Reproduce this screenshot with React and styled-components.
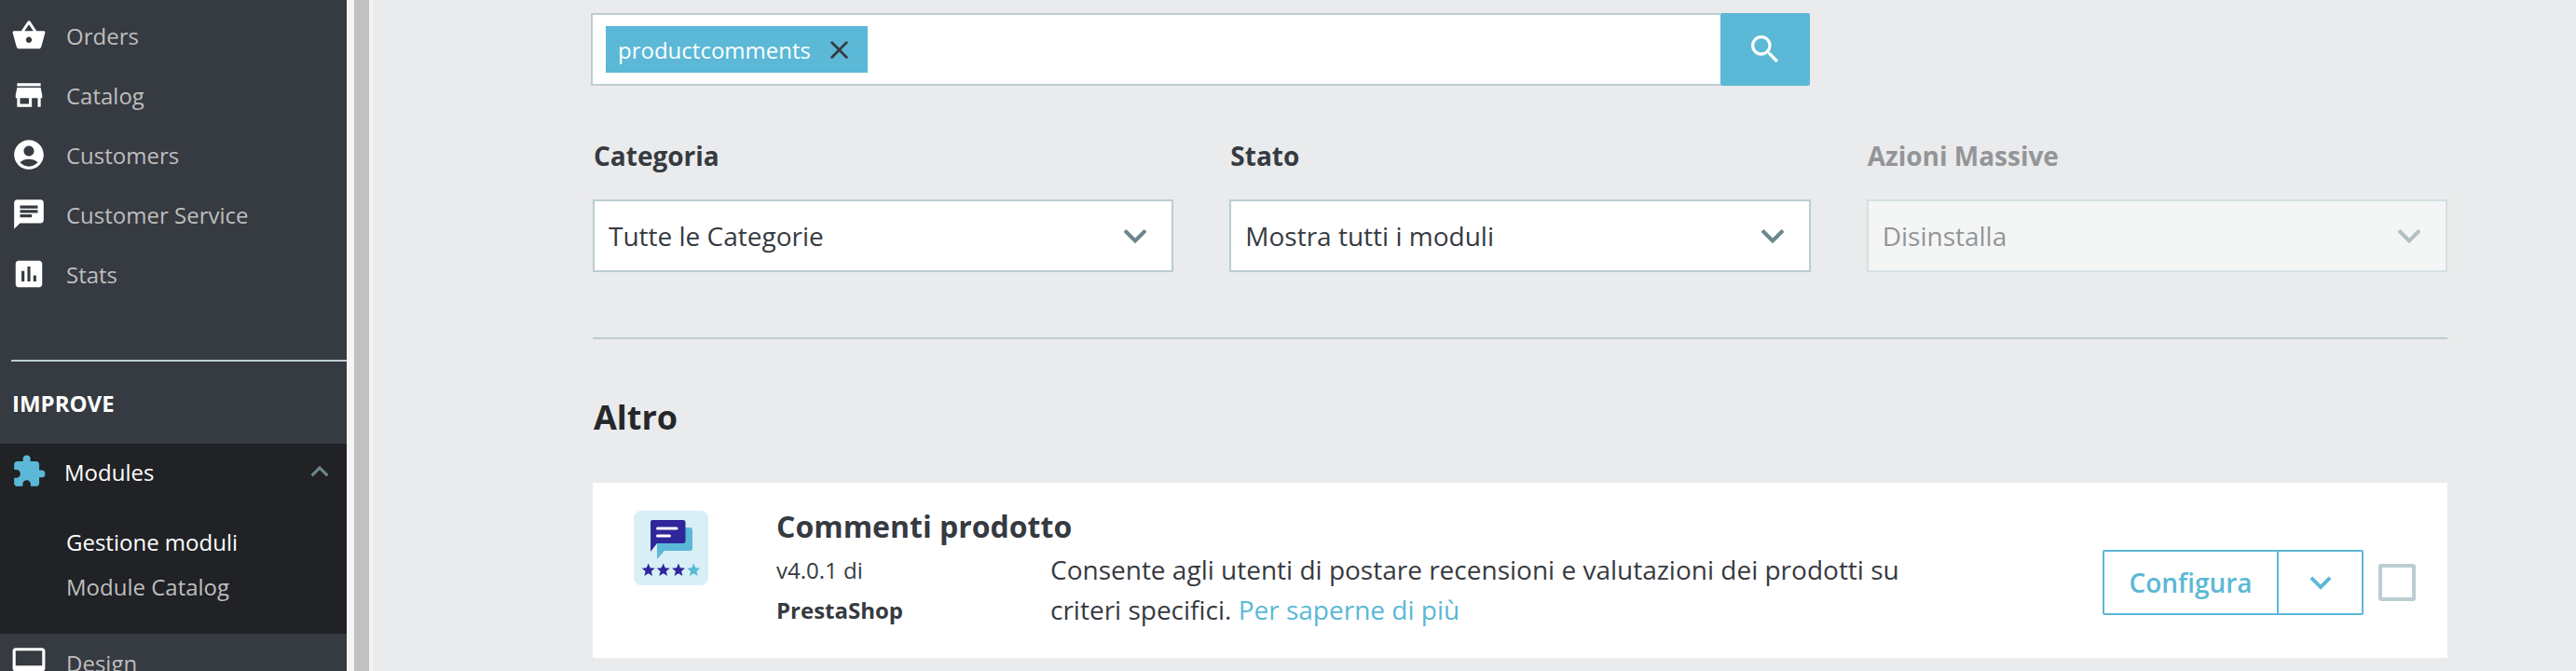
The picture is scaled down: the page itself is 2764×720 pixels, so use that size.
import React from "react"
import styled, { createGlobalStyle } from "styled-components"
import {
  MdShoppingBasket,
  MdStore,
  MdAccountCircle,
  MdChat,
  MdAssessment,
  MdExtension,
  MdExpandMore,
  MdExpandLess,
  MdSearch,
  MdClose,
} from "react-icons/md"

const GlobalStyle = createGlobalStyle`
  html, body {
    margin: 0;
    padding: 0;
    background: #eaebec;
    font-family: "Open Sans", "Noto Sans", sans-serif;
    color: #363a41;
  }
`

const Page = styled("div")`
  display: flex;
  width: 2764px;
  height: 720px;
  overflow: hidden;
`

const Sidebar = styled("nav")`
  flex: none;
  display: flex;
  flex-direction: column;
  width: 372px;
  padding-top: 6px;
  box-sizing: border-box;
  background: #363a41;
`

const NavRow = styled("div")`
  flex: none;
  display: flex;
  align-items: center;
  height: ${(p) => p.$height || 64}px;
  padding-left: 12px;
  color: #bebebe;
  font-size: 24px;
`

const NavIcon = styled("span")`
  display: flex;
  justify-content: center;
  flex: none;
  width: 38px;
  margin-right: 21px;
  color: #fff;
  font-size: 38px;
`

const NavDivider = styled("div")`
  flex: none;
  height: 2px;
  margin: 60px 0 0 12px;
  background: #bbcdd2;
`

const NavTitle = styled("div")`
  flex: none;
  padding: 27px 0 25px 13px;
  color: #fff;
  font-size: 24px;
  font-weight: 700;
  line-height: 36px;
`

const ActiveGroup = styled("div")`
  flex: none;
  height: 204px;
  background: #202226;
`

const ActiveRow = styled("div")`
  display: flex;
  align-items: center;
  height: 60px;
  padding: 0 10px 0 12px;
  color: #fff;
  font-size: 24px;
`

const PuzzleIcon = styled("span")`
  display: flex;
  flex: none;
  width: 38px;
  margin-right: 19px;
  color: #5bb8d6;
  font-size: 40px;
`

const Collapse = styled("span")`
  display: flex;
  margin-left: auto;
  color: #6c868e;
  font-size: 38px;
`

const SubMenu = styled("div")`
  padding: 22px 0 0 71px;
`

const SubItem = styled("div")`
  height: 48px;
  color: ${(p) => (p.$active ? "#fff" : "#bebebe")};
  font-size: 24px;
  line-height: 48px;
`

const Gutter = styled("div")`
  flex: none;
  width: 16px;
  padding: 0 4px 0 8px;
  background: #f4f4f4;
`

const Thumb = styled("div")`
  height: 100%;
  background: #c1c1c1;
`

const Main = styled("main")`
  flex: 1;
  padding: 14px 138px 0 234px;
  min-width: 0;
`

const SearchBar = styled("div")`
  display: flex;
  width: 1308px;
  height: 78px;
`

const SearchField = styled("div")`
  flex: 1;
  display: flex;
  align-items: center;
  padding-left: 14px;
  border: 2px solid #bbcdd2;
  border-right: 0;
  background: #fff;
`

const Tag = styled("div")`
  display: flex;
  align-items: center;
  height: 50px;
  padding: 0 14px 0 13px;
  background: #5bb8d6;
  color: #fff;
  font-size: 24px;
`

const TagClose = styled("span")`
  display: flex;
  margin-left: 14px;
  color: #363a41;
  font-size: 33px;
`

const SearchButton = styled("div")`
  display: flex;
  align-items: center;
  justify-content: center;
  flex: none;
  width: 96px;
  border-radius: 2px;
  background: #5bb8d6;
  color: #fff;
  font-size: 40px;
`

const Offset = styled("div")`
  margin-left: 2px;
`

const Filters = styled("div")`
  display: grid;
  grid-template-columns: repeat(3, 1fr);
  gap: 60px;
  margin-top: 55px;
`

const FilterLabel = styled("div")`
  margin-bottom: 27px;
  padding-left: 1px;
  color: ${(p) => (p.$disabled ? "#939598" : "#363a41")};
  font-size: 28px;
  font-weight: 700;
  line-height: 40px;
`

const Select = styled("div")`
  display: flex;
  align-items: center;
  justify-content: space-between;
  height: 78px;
  padding: 0 14px 0 15px;
  box-sizing: border-box;
  border: 2px solid ${(p) => (p.$disabled ? "#d3dfe3" : "#bbcdd2")};
  background: ${(p) => (p.$disabled ? "#f4f6f5" : "#fff")};
  color: ${(p) => (p.$disabled ? "#939598" : "#363a41")};
  font-size: 28px;
`

const SelectArrow = styled("span")`
  display: flex;
  color: ${(p) => (p.$disabled ? "#b0c0c5" : "#6c868e")};
  font-size: 50px;
`

const Rule = styled("div")`
  height: 2px;
  margin-top: 70px;
  background: #bdcbd0;
`

const SectionTitle = styled("h2")`
  margin: 62px 0 48px;
  padding-left: 1px;
  color: #25272b;
  font-size: 36px;
  font-weight: 700;
  line-height: 44px;
`

const Card = styled("div")`
  display: flex;
  height: 188px;
  padding: 0 34px 0 44px;
  box-sizing: border-box;
  background: #fff;
`

const LogoBox = styled("div")`
  flex: none;
  width: 80px;
  height: 80px;
  margin: 30px 73px 0 0;
  border-radius: 8px;
  background: #d8eff6;
`

const CardBody = styled("div")`
  flex: 1;
  padding-top: 25px;
`

const CardTitle = styled("div")`
  font-size: 32px;
  font-weight: 700;
  line-height: 44px;
`

const CardRow = styled("div")`
  display: flex;
`

const Meta = styled("div")`
  flex: none;
  width: 294px;
  padding-top: 3px;
  font-size: 24px;
  line-height: 43px;
`

const Author = styled("div")`
  font-weight: 700;
`

const Description = styled("div")`
  width: 960px;
  padding-top: 3px;
  font-size: 28px;
  line-height: 43px;
`

const MoreLink = styled("a")`
  color: #5bb8d6;
`

const Actions = styled("div")`
  flex: none;
  display: flex;
  align-items: center;
  gap: 16px;
  height: 70px;
  margin-top: 72px;
`

const ButtonGroup = styled("div")`
  display: flex;
  width: 280px;
  height: 70px;
  box-sizing: border-box;
  border: 2px solid #5bb8d6;
  border-radius: 2px;
  color: #5bb8d6;
`

const ConfigButton = styled("div")`
  display: flex;
  align-items: center;
  justify-content: center;
  width: 185px;
  border-right: 2px solid #5bb8d6;
  font-size: 28px;
  font-weight: 600;
`

const MenuButton = styled("div")`
  flex: 1;
  display: flex;
  align-items: center;
  justify-content: center;
  font-size: 46px;
`

const Checkbox = styled("div")`
  width: 40px;
  height: 40px;
  box-sizing: border-box;
  border: 4px solid #bbcdd2;
  border-radius: 3px;
  background: #fff;
`

const navItems = [
  { label: "Orders", Icon: MdShoppingBasket },
  { label: "Catalog", Icon: MdStore },
  { label: "Customers", Icon: MdAccountCircle },
  { label: "Customer Service", Icon: MdChat },
  { label: "Stats", Icon: MdAssessment },
]

const filters = [
  { label: "Categoria", value: "Tutte le Categorie" },
  { label: "Stato", value: "Mostra tutti i moduli" },
  { label: "Azioni Massive", value: "Disinstalla", disabled: true },
]

const DesktopIcon = () => (
  <svg width="38" height="38" viewBox="0 0 24 24" fill="currentColor">
    <path d="M21 2H3c-1.100 0-2 .9-2 2v12c0 1.100.9 2 2 2h7l-2 3v1h8v-1l-2-3h7c1.100 0 2-.9 2-2V4c0-1.100-.9-2-2-2zm0 12H3V4h18v10z" />
  </svg>
)

const Star = ({ x, fill }) => {
  const y = 64
  const pts = []
  for (let i = 0; i < 10; i++) {
    const r = i % 2 === 0 ? 7.400 : 3.300
    const a = (Math.PI / 5) * i - Math.PI / 2
    pts.push(`${x + r * Math.cos(a)},${y + r * Math.sin(a)}`)
  }
  return <polygon points={pts.join(" ")} fill={fill} />
}

const ModuleLogo = () => (
  <svg width="80" height="80" viewBox="0 0 80 80">
    <path d="M27 18h33a3 3 0 0 1 3 3v19a3 3 0 0 1-3 3H33l-8 9V21a3 3 0 0 1 2-3z" fill="#5bb8d6" />
    <path d="M20 10h33a2.500 2.500 0 0 1 2.500 2.500v20a2.500 2.500 0 0 1-2.500 2.500H25l-7 9V12a2 2 0 0 1 2-2z" fill="#30269b" />
    <rect x="24" y="17.500" width="23.500" height="3" rx="1.500" fill="#fff" />
    <rect x="24" y="25.500" width="16" height="3" rx="1.500" fill="#fff" />
    <Star x={15.700} fill="#30269b" />
    <Star x={31.700} fill="#30269b" />
    <Star x={48} fill="#30269b" />
    <Star x={64.300} fill="#5bb8d6" />
  </svg>
)

const App = () => {
  return (
    <Page>
      <GlobalStyle />
      <Sidebar>
        {navItems.map(({ label, Icon }) => (
          <NavRow key={label}>
            <NavIcon>
              <Icon />
            </NavIcon>
            {label}
          </NavRow>
        ))}
        <NavDivider />
        <NavTitle>IMPROVE</NavTitle>
        <ActiveGroup>
          <ActiveRow>
            <PuzzleIcon>
              <MdExtension />
            </PuzzleIcon>
            Modules
            <Collapse>
              <MdExpandLess />
            </Collapse>
          </ActiveRow>
          <SubMenu>
            <SubItem $active>Gestione moduli</SubItem>
            <SubItem>Module Catalog</SubItem>
          </SubMenu>
        </ActiveGroup>
        <NavRow $height={62}>
          <NavIcon>
            <DesktopIcon />
          </NavIcon>
          Design
        </NavRow>
      </Sidebar>
      <Gutter>
        <Thumb />
      </Gutter>
      <Main>
        <SearchBar>
          <SearchField>
            <Tag>
              productcomments
              <TagClose>
                <MdClose />
              </TagClose>
            </Tag>
          </SearchField>
          <SearchButton>
            <MdSearch />
          </SearchButton>
        </SearchBar>
        <Offset>
          <Filters>
            {filters.map((f) => (
              <div key={f.label}>
                <FilterLabel $disabled={f.disabled}>{f.label}</FilterLabel>
                <Select $disabled={f.disabled}>
                  {f.value}
                  <SelectArrow $disabled={f.disabled}>
                    <MdExpandMore />
                  </SelectArrow>
                </Select>
              </div>
            ))}
          </Filters>
          <Rule />
          <SectionTitle>Altro</SectionTitle>
          <Card>
            <LogoBox>
              <ModuleLogo />
            </LogoBox>
            <CardBody>
              <CardTitle>Commenti prodotto</CardTitle>
              <CardRow>
                <Meta>
                  v4.0.1 di
                  <Author>PrestaShop</Author>
                </Meta>
                <Description>
                  Consente agli utenti di postare recensioni e valutazioni dei prodotti su criteri
                  specifici. <MoreLink>Per saperne di più</MoreLink>
                </Description>
              </CardRow>
            </CardBody>
            <Actions>
              <ButtonGroup>
                <ConfigButton>Configura</ConfigButton>
                <MenuButton>
                  <MdExpandMore />
                </MenuButton>
              </ButtonGroup>
              <Checkbox />
            </Actions>
          </Card>
        </Offset>
      </Main>
    </Page>
  )
}

export default App
